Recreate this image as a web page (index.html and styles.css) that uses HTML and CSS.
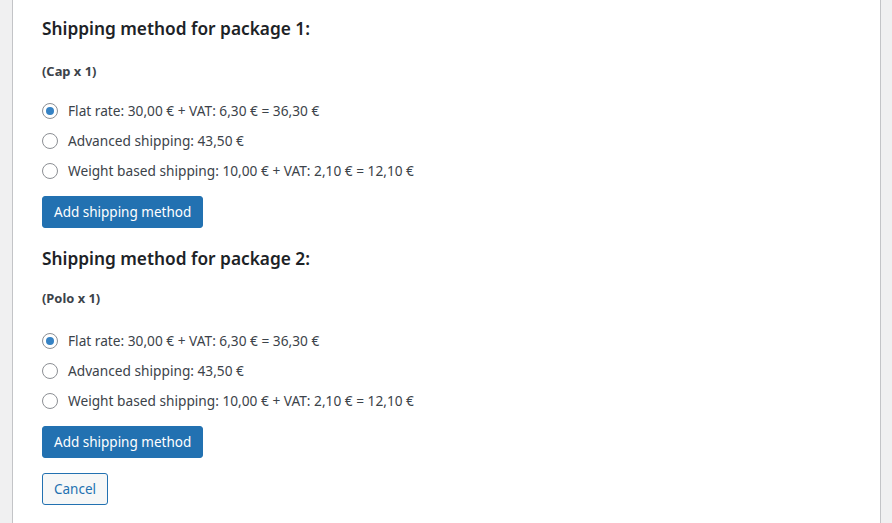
FILE: index.html
```html
<!DOCTYPE html>
<html>
<head>
<meta charset="utf-8">
<link rel="stylesheet" href="styles.css">
</head>
<body>
<div class="page">
  <div class="panel">
    <div class="package first">
      <h3 class="title">Shipping method for package 1:</h3>
      <p class="items">(Cap x 1)</p>
      <ul class="methods">
        <li><label><input type="radio" name="p1" checked> Flat rate: 30,00 € + VAT: 6,30 € = 36,30 €</label></li>
        <li><label><input type="radio" name="p1"> Advanced shipping: 43,50 €</label></li>
        <li><label><input type="radio" name="p1"> Weight based shipping: 10,00 € + VAT: 2,10 € = 12,10 €</label></li>
      </ul>
      <button class="btn primary">Add shipping method</button>
    </div>
    <div class="package second">
      <h3 class="title">Shipping method for package 2:</h3>
      <p class="items">(Polo x 1)</p>
      <ul class="methods">
        <li><label><input type="radio" name="p2" checked> Flat rate: 30,00 € + VAT: 6,30 € = 36,30 €</label></li>
        <li><label><input type="radio" name="p2"> Advanced shipping: 43,50 €</label></li>
        <li><label><input type="radio" name="p2"> Weight based shipping: 10,00 € + VAT: 2,10 € = 12,10 €</label></li>
      </ul>
      <button class="btn primary">Add shipping method</button>
    </div>
    <button class="btn secondary">Cancel</button>
  </div>
</div>
</body>
</html>
```

FILE: styles.css
```css
* { box-sizing: border-box; }
html, body { margin: 0; padding: 0; }
body {
  background: #f0f0f1;
  font-family: "Noto Sans", "Open Sans", sans-serif;
  color: #3c434a;
  font-size: 13.7px;
}
.page {
  padding-left: 12px;
  width: 881px;
  height: 523px;
}
.panel {
  background: #fff;
  border-left: 1px solid #c3c4c7;
  border-right: 1px solid #c3c4c7;
  height: 523px;
  padding: 16px 0 0 29px;
  display: flex;
  flex-direction: column;
  align-items: flex-start;
}
.package {
  display: flex;
  flex-direction: column;
  align-items: flex-start;
  margin-bottom: 15px;
}
.package.first { margin-bottom: 18px; }
.title {
  margin: 0;
  font-size: 17.3px;
  font-weight: 600;
  color: #1d2327;
  line-height: 26px;
}
.items {
  margin: 20px 0 0 0;
  font-size: 12.9px;
  font-weight: 700;
  line-height: 18px;
  color: #3c434a;
}
.second .items { margin-top: 17px; }
.methods {
  list-style: none;
  margin: 21px 0 0 0;
  padding: 0;
  display: flex;
  flex-direction: column;
  gap: 10px;
}
.second .methods { margin-top: 24px; }
.methods li { line-height: 20px; }
.methods label {
  display: flex;
  align-items: center;
  gap: 10px;
}
input[type=radio] {
  -webkit-appearance: none;
  appearance: none;
  margin: 0;
  width: 16px;
  height: 16px;
  border: 1px solid #8c8f94;
  border-radius: 50%;
  background: #fff;
  display: grid;
  place-items: center;
}
input[type=radio]:checked::before {
  content: "";
  width: 8px;
  height: 8px;
  border-radius: 50%;
  background: #3582c4;
}
.btn {
  font-family: inherit;
  font-size: 13.5px;
  line-height: 30px;
  height: 32px;
  padding: 0 11px;
  border-radius: 3px;
  cursor: pointer;
}
.primary {
  margin-top: 15px;
  background: #2271b1;
  border: 1px solid #2271b1;
  color: #fff;
}
.secondary {
  background: #f6f7f7;
  border: 1px solid #2271b1;
  color: #2271b1;
  padding: 0 11px;
}
```
